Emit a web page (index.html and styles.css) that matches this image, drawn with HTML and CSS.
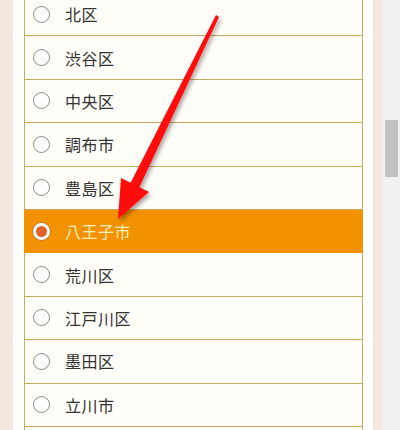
FILE: index.html
```html
<!DOCTYPE html>
<html lang="ja">
<head>
<meta charset="utf-8">
<title>地域選択</title>
<link rel="stylesheet" href="styles.css">
</head>
<body>
<div class="page">
  <div class="edge edge-left"></div>
  <div class="panel">
    <ul class="choices">
      <li class="choice"><span class="radio"></span><span class="label">北区</span></li>
      <li class="choice"><span class="radio"></span><span class="label">渋谷区</span></li>
      <li class="choice"><span class="radio"></span><span class="label">中央区</span></li>
      <li class="choice"><span class="radio"></span><span class="label">調布市</span></li>
      <li class="choice"><span class="radio"></span><span class="label">豊島区</span></li>
      <li class="choice selected"><span class="radio"></span><span class="label">八王子市</span></li>
      <li class="choice"><span class="radio"></span><span class="label">荒川区</span></li>
      <li class="choice"><span class="radio"></span><span class="label">江戸川区</span></li>
      <li class="choice"><span class="radio"></span><span class="label">墨田区</span></li>
      <li class="choice"><span class="radio"></span><span class="label">立川市</span></li>
      <li class="choice empty"></li>
    </ul>
  </div>
  <div class="edge edge-right"></div>
  <div class="scrollbar"><div class="thumb"></div></div>
</div>
<svg class="annotation" width="400" height="430" viewBox="0 0 400 430">
  <defs>
    <filter id="shadow" x="-20%" y="-20%" width="140%" height="140%">
      <feDropShadow dx="2" dy="3" stdDeviation="2" flood-color="#000" flood-opacity="0.35"/>
    </filter>
  </defs>
  <g filter="url(#shadow)" fill="#ff0a0a">
    <polygon points="216,15 219,17 139,188 130,184"/>
    <polygon points="118,219 121,178 149,192"/>
  </g>
</svg>
</body>
</html>
```
FILE: styles.css
```css
html, body {
  margin: 0;
  padding: 0;
  height: 430px;
  overflow: hidden;
  background: #ffffff;
  font-family: "Noto Sans CJK JP", "Noto Sans", sans-serif;
}

.page {
  display: flex;
  height: 430px;
  width: 400px;
}

.edge {
  background: #f3e7de;
  flex: none;
}

.edge-left { width: 13px; }
.edge-right { width: 10px; }

.panel {
  width: 360px;
  flex: none;
  background: #ffffff;
  padding: 0 10px 0 11px;
  box-sizing: border-box;
  overflow: hidden;
}

.choices {
  list-style: none;
  margin: -7px 0 0 0;
  padding: 0;
  border-left: 1px solid #c9aa5c;
  border-right: 1px solid #c9aa5c;
}

.choice {
  height: 43.4px;
  box-sizing: border-box;
  border-bottom: 1px solid #c9aa5c;
  background: #fffef8;
  display: flex;
  align-items: center;
  padding-left: 8px;
  gap: 15px;
  color: #333333;
  font-size: 16px;
}

.radio {
  width: 17px;
  height: 17px;
  box-sizing: border-box;
  border: 1px solid #8a8a8a;
  border-radius: 50%;
  background: #ffffff;
  flex: none;
}

.label {
  line-height: 1;
  letter-spacing: 0.5px;
}

.choice.selected {
  background: #f39200;
  color: #ffedb4;
  border-bottom-color: #f39200;
  margin: 0 -1px;
  padding-left: 9px;
}

.choice.selected .radio {
  border: 3px solid #ffffff;
  background: #e2602a;
  box-shadow: 0 0 0 1px #c97a30;
}

.scrollbar {
  width: 17px;
  flex: none;
  background: #f1f1f1;
  box-sizing: border-box;
  padding: 120px 2px 0 2px;
}

.thumb {
  height: 57px;
  background: #c1c1c1;
}

.annotation {
  position: absolute;
  top: 0;
  left: 0;
  pointer-events: none;
}
```
